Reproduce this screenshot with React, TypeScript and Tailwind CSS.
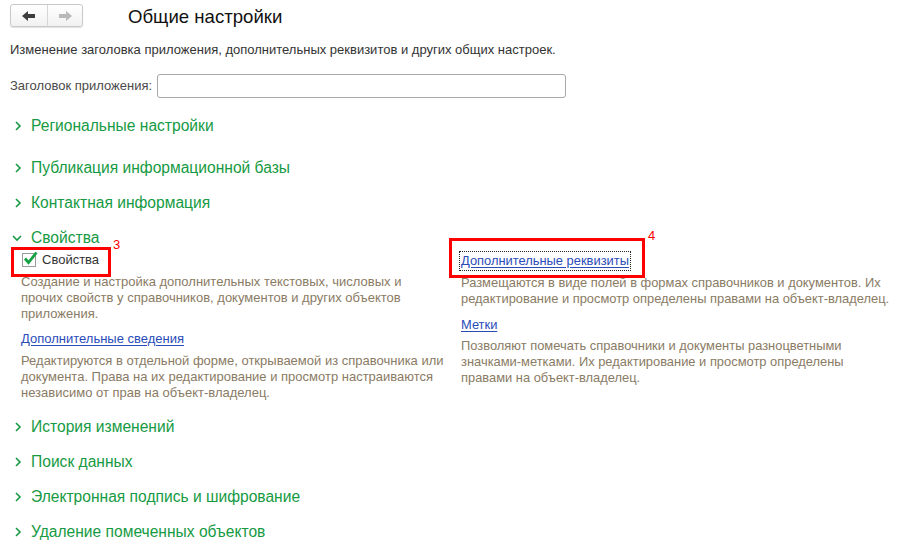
import React from 'react';

const GREEN = 'text-[#169a43]';

function Chevron({ open }: { open?: boolean }) {
  return open ? (
    <svg width="10" height="8" viewBox="0 0 10 8" className="shrink-0">
      <path d="M1 2 L5 6 L9 2" fill="none" stroke="#169a43" strokeWidth="1.6" />
    </svg>
  ) : (
    <svg width="8" height="10" viewBox="0 0 8 10" className="shrink-0">
      <path d="M2 1 L6 5 L2 9" fill="none" stroke="#169a43" strokeWidth="1.6" />
    </svg>
  );
}

function GroupHeading({ title, open, className = '' }: { title: string; open?: boolean; className?: string }) {
  return (
    <div className={`flex items-center h-[20px] ${className}`}>
      <div className={`flex w-[21px] items-center ${open ? 'pl-[2px]' : 'pl-[4px]'}`}>
        <Chevron open={open} />
      </div>
      <span className={`text-[15.6px] leading-[20px] ${GREEN}`}>{title}</span>
    </div>
  );
}

function NavButtons() {
  return (
    <div className="flex h-[23px] w-[73px] rounded-[3px] border border-[#c9c9c9] bg-gradient-to-b from-white to-[#f1f1f1] shadow-[0_1px_1px_rgba(0,0,0,0.12)]">
      <div className="flex w-[37px] items-center justify-center border-r border-[#d6d6d6]">
        <svg width="14" height="10" viewBox="0 0 14 10">
          <path d="M0 5 L6 0 L6 3 L13 3 L13 7 L6 7 L6 10 Z" fill="#3d3d3d" />
        </svg>
      </div>
      <div className="flex flex-1 items-center justify-center">
        <svg width="14" height="10" viewBox="0 0 14 10">
          <path d="M14 5 L8 0 L8 3 L1 3 L1 7 L8 7 L8 10 Z" fill="#b9b9b9" />
        </svg>
      </div>
    </div>
  );
}

function Note({ children, className = '' }: { children: React.ReactNode; className?: string }) {
  return <p className={`leading-[16px] text-[#8a7b64] ${className}`}>{children}</p>;
}

function Link({ children }: { children: React.ReactNode }) {
  return <span className="text-[#2a4cb9] underline underline-offset-2">{children}</span>;
}

export default function App() {
  return (
    <div
      className="relative w-[914px] h-[555px] overflow-hidden bg-white text-[#333]"
      style={{ fontFamily: '"Liberation Sans", Arial, sans-serif' }}
    >
      <div className="flex flex-col pl-[10px]">
        {/* header */}
        <div className="mt-[4px] flex h-[23px] items-center">
          <NavButtons />
          <h1 className="ml-[45px] pt-[3px] text-[18.6px] font-normal text-[#111]">Общие настройки</h1>
        </div>

        <div className="mt-[15px] text-[13px] leading-[16px] text-[#333]">
          Изменение заголовка приложения, дополнительных реквизитов и других общих настроек.
        </div>

        <div className="mt-[16px] flex h-[24px] items-center">
          <span className="text-[13px] text-[#4a4a4a]">Заголовок приложения:</span>
          <div className="ml-[5px] h-[24px] w-[409px] rounded-[3px] border border-[#a8a8a8] bg-white" />
        </div>

        <GroupHeading title="Региональные настройки" className="mt-[18px]" />
        <GroupHeading title="Публикация информационной базы" className="mt-[22px]" />
        <GroupHeading title="Контактная информация" className="mt-[15px]" />
        <GroupHeading title="Свойства" open className="mt-[15px]" />

        {/* expanded group */}
        <div className="mt-[4px] flex pl-[11px] text-[13px] leading-[16px]">
          <div className="w-[440px]">
            <div className="flex h-[16px] items-center">
              <div className="relative ml-[1px] h-[14px] w-[14px] border border-[#9a9a9a] bg-white">
                <svg width="15" height="15" viewBox="0 0 15 15" className="absolute -top-[3px] left-[0px]">
                  <path d="M2 7.5 L5.5 11.5 L13.5 1.5" fill="none" stroke="#16a145" strokeWidth="2.8" />
                </svg>
              </div>
              <span className="ml-[6px] text-[#333]">Свойства</span>
            </div>
            <Note className="mt-[6px]">
              Создание и настройка дополнительных текстовых, числовых и<br />
              прочих свойств у справочников, документов и других объектов<br />
              приложения.
            </Note>
            <div className="mt-[9px] h-[16px]">
              <Link>Дополнительные сведения</Link>
            </div>
            <Note className="mt-[6px]">
              Редактируются в отдельной форме, открываемой из справочника или<br />
              документа. Права на их редактирование и просмотр настраиваются<br />
              независимо от прав на объект-владелец.
            </Note>
          </div>

          <div className="mt-[1px] w-[440px] text-[12.9px]">
            <div className="h-[16px]">
              <span className="inline-block outline-1 outline-dotted outline-[#222] outline-offset-[1px]">
                <Link>Дополнительные реквизиты</Link>
              </span>
            </div>
            <Note className="mt-[6px]">
              Размещаются в виде полей в формах справочников и документов. Их<br />
              редактирование и просмотр определены правами на объект-владелец.
            </Note>
            <div className="mt-[10px] h-[16px]">
              <Link>Метки</Link>
            </div>
            <Note className="mt-[5px]">
              Позволяют помечать справочники и документы разноцветными<br />
              значками-метками. Их редактирование и просмотр определены<br />
              правами на объект-владелец.
            </Note>
          </div>
        </div>

        <GroupHeading title="История изменений" className="mt-[16px]" />
        <GroupHeading title="Поиск данных" className="mt-[15px]" />
        <GroupHeading title="Электронная подпись и шифрование" className="mt-[15px]" />
        <GroupHeading title="Удаление помеченных объектов" className="mt-[15px]" />
      </div>

      {/* annotations */}
      <div className="absolute left-[11px] top-[247px] h-[30px] w-[100px] border-[3px] border-[#ff0000]" />
      <span className="absolute left-[113px] top-[238px] text-[13px] leading-[13px] text-[#ff0000]">3</span>
      <div className="absolute left-[449px] top-[238px] h-[40px] w-[196px] border-[3px] border-[#ff0000]" />
      <span className="absolute left-[648px] top-[229px] text-[13px] leading-[13px] text-[#ff0000]">4</span>
    </div>
  );
}
